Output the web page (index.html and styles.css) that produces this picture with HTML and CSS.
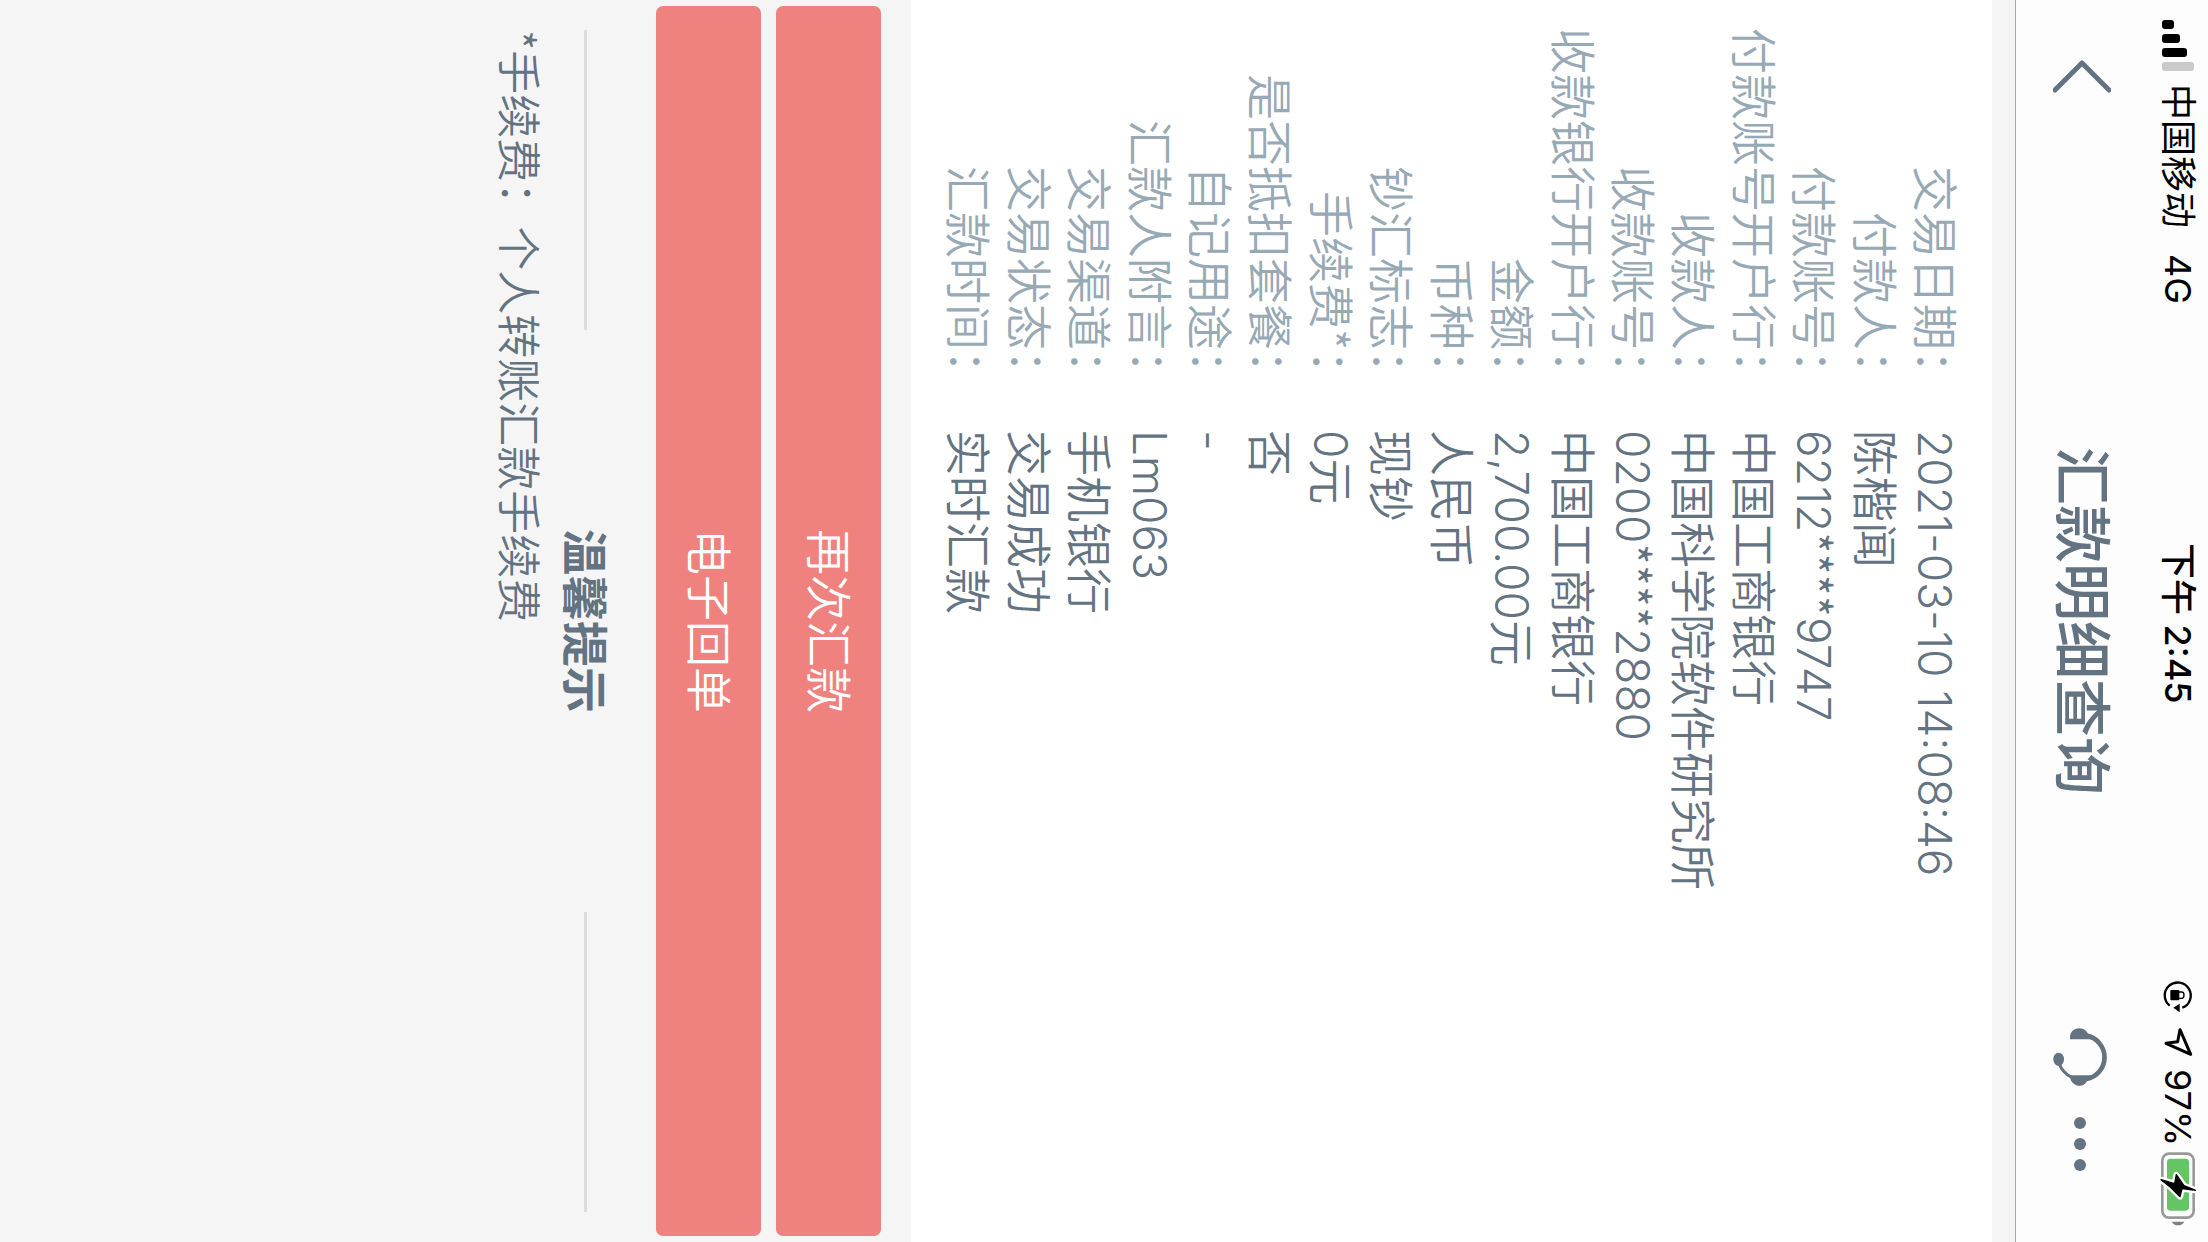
FILE: index.html
```html
<!DOCTYPE html>
<html lang="zh-CN">
<head>
<meta charset="utf-8">
<meta name="viewport" content="width=device-width, initial-scale=1">
<title>汇款明细查询</title>
<link rel="stylesheet" href="styles.css">
</head>
<body>
<div class="statusbar">
  <div class="status-left">
    <svg class="signal" width="32" height="51" viewBox="0 0 32 51" aria-hidden="true">
      <rect width="12" height="9" rx="3"/>
      <rect y="14" width="18" height="9" rx="3"/>
      <rect y="28" width="25" height="9" rx="3"/>
      <rect y="42" width="32" height="9" rx="3" fill="#cacaca"/>
    </svg>
    <span class="carrier">中国移动</span>
    <span>4G</span>
  </div>
  <time class="clock">下午 2:45</time>
  <div class="status-right">
    <svg class="lock" width="34" height="32" viewBox="540 60 102 96" aria-hidden="true">
      <path d="M566 137A39 39 0 1 1 604 143" fill="none" stroke="#000" stroke-width="7"/>
      <path d="M577 143L596 131V157Z"/>
      <rect x="568" y="90" width="27" height="31" rx="3"/>
      <path d="M594 96H602Q609 96 609 105Q609 115 602 115H594" fill="none" stroke="#000" stroke-width="4"/>
    </svg>
    <svg class="location" width="34" height="30" viewBox="540 205 102 90" aria-hidden="true">
      <path d="M597 213L629 287L555 254L590 249Z" fill="none" stroke="#000" stroke-width="9" stroke-linejoin="round"/>
    </svg>
    <span>97%</span>
    <svg width="36" height="74" viewBox="540 577 108 222" aria-hidden="true">
      <rect x="547" y="582" width="94" height="192" rx="20" fill="none" stroke="#999" stroke-width="8"/>
      <rect x="561" y="597" width="66" height="156" rx="10" fill="#65c466"/>
      <path d="M575 786H613Q607 797 594 797Q581 797 575 786Z" fill="#808080"/>
      <path d="M543 660L584 672L589 645L612 678L647 692L606 687L600 711L573 684Z" stroke="#fff" stroke-width="18" stroke-linejoin="round"/>
      <path d="M543 660L584 672L589 645L612 678L647 692L606 687L600 711L573 684Z" stroke="#000" stroke-width="4" stroke-linejoin="round"/>
    </svg>
  </div>
</div>

<header class="navbar">
  <div class="nav-left">
    <button class="icon-button" type="button" aria-label="返回">
      <svg width="58" height="34" viewBox="0 0 58 34" aria-hidden="true">
        <path d="M2 30L29 3L56 30" fill="none" stroke="#637381" stroke-width="5" stroke-linecap="round" stroke-linejoin="round"/>
      </svg>
    </button>
  </div>
  <h1 class="nav-title">汇款明细查询</h1>
  <div class="nav-right">
    <button class="icon-button" type="button" aria-label="客服">
      <svg width="54" height="58" viewBox="218 200 162 174" fill="#637381" aria-hidden="true">
        <path d="M318 223A66 66 0 0 1 318 353" fill="none" stroke="#637381" stroke-width="14"/>
        <path d="M272 347Q246 333 237 308" fill="none" stroke="#637381" stroke-width="9"/>
        <ellipse cx="235" cy="294" rx="16" ry="20"/>
        <path d="M269 234V226C272 195 312 194 322 216L338 234Z"/>
        <path d="M268 342H338L320 359C312 380 278 378 270 352Z"/>
      </svg>
    </button>
    <button class="icon-button" type="button" aria-label="更多">
      <svg width="14" height="56" viewBox="0 0 14 56" fill="#637381" aria-hidden="true">
        <circle cx="7" cy="7" r="6"/><circle cx="7" cy="28" r="6"/><circle cx="7" cy="49" r="6"/>
      </svg>
    </button>
  </div>
</header>

<main>
  <dl class="details">
    <dt>交易日期：</dt><dd>2021-03-10 14:08:46</dd>
    <dt>付款人：</dt><dd>陈楷闻</dd>
    <dt>付款账号：</dt><dd>6212<span class="mask">****</span>9747</dd>
    <dt>付款账号开户行：</dt><dd>中国工商银行</dd>
    <dt>收款人：</dt><dd>中国科学院软件研究所</dd>
    <dt>收款账号：</dt><dd>0200<span class="mask">****</span>2880</dd>
    <dt>收款银行开户行：</dt><dd>中国工商银行</dd>
    <dt>金额：</dt><dd>2,700.00元</dd>
    <dt>币种：</dt><dd>人民币</dd>
    <dt>钞汇标志：</dt><dd>现钞</dd>
    <dt>手续费<span class="mask">*</span>：</dt><dd>0元</dd>
    <dt>是否抵扣套餐：</dt><dd>否</dd>
    <dt>自记用途：</dt><dd>-</dd>
    <dt>汇款人附言：</dt><dd>Lm063</dd>
    <dt>交易渠道：</dt><dd>手机银行</dd>
    <dt>交易状态：</dt><dd>交易成功</dd>
    <dt>汇款时间：</dt><dd>实时汇款</dd>
  </dl>

  <div class="actions">
    <button class="primary" type="button">再次汇款</button>
    <button class="primary" type="button">电子回单</button>
  </div>

  <section class="tips">
    <h2 class="tips-title">温馨提示</h2>
    <p class="tips-text"><span class="mask">*</span>手续费：个人转账汇款手续费</p>
  </section>
</main>
</body>
</html>
```
FILE: styles.css
```css
/* The phone screen is turned on its side: lines run top to bottom, blocks right to left. */
html {
  writing-mode: vertical-rl;
  text-orientation: sideways;
  block-size: 100%;
  background: #f5f5f5;
}

*,
*::before,
*::after {
  box-sizing: border-box;
}

body {
  margin: 0;
  font-family: Inter, "Noto Sans CJK SC", sans-serif;
  font-size: 46px;
  font-weight: 350;
  color: #637381;
}

h1,
h2,
p,
dl,
dd {
  margin: 0;
}

button {
  padding: 0;
  border: 0;
  background: none;
  color: inherit;
  font: inherit;
  writing-mode: inherit;
  text-orientation: inherit;
}

svg {
  display: block;
  flex: none;
}

.statusbar,
.navbar {
  display: grid;
  grid-template-columns: 1fr auto 1fr;
  align-items: center;
  background: #fdfdfd;
}

.statusbar {
  block-size: 60px;
  padding-inline: 20px 16px;
  font-size: 36px;
  font-weight: 400;
  line-height: 60px;
  color: #000;
}

.status-left,
.status-right,
.nav-left,
.nav-right {
  display: flex;
  align-items: center;
}

.status-left {
  gap: 13px;
}

.carrier {
  margin-inline-end: 13px;
}

.clock {
  font-weight: 500;
}

.status-right {
  justify-content: flex-end;
  gap: 6px;
}

.lock {
  margin-inline-end: 9px;
}

.location {
  margin-inline-end: 6px;
}

.navbar {
  block-size: 133px;
  padding-inline: 60px;
  border-block-end: 1px solid #a8a8a8;
}

.nav-title {
  font-size: 58px;
  font-weight: 500;
  line-height: 80px;
}

.nav-right {
  justify-content: flex-end;
  gap: 30px;
  padding-block-start: 4px;
  padding-inline-end: 10px;
}

.details {
  display: grid;
  grid-template-columns: 396px 1fr;
  grid-auto-rows: 1fr;
  column-gap: 34px;
  block-size: 1081px;
  margin-block-start: 23px;
  padding-block: 27px;
  background: #fff;
  line-height: 60px;
}

.details dt {
  color: #97a9b4;
  text-align: end;
  white-space: nowrap;
}

.mask {
  font-family: "Noto Sans CJK SC", sans-serif;
  line-height: 1;
}

.actions {
  display: grid;
  gap: 15px;
  padding-block: 30px;
  padding-inline: 6px;
}

.primary {
  block-size: 105px;
  border-radius: 7px;
  background: #ef827e;
  color: #fff;
  line-height: 60px;
}

.tips {
  padding-block-start: 11px;
  padding-inline: 30px;
}

.tips-title {
  display: flex;
  align-items: center;
  justify-content: space-between;
  font-size: 46px;
  font-weight: 600;
  line-height: 60px;
}

.tips-title::before,
.tips-title::after {
  content: "";
  inline-size: 300px;
  block-size: 3px;
  background: #dcdcdc;
}

.tips-text {
  font-size: 44px;
  line-height: 74px;
}
```
